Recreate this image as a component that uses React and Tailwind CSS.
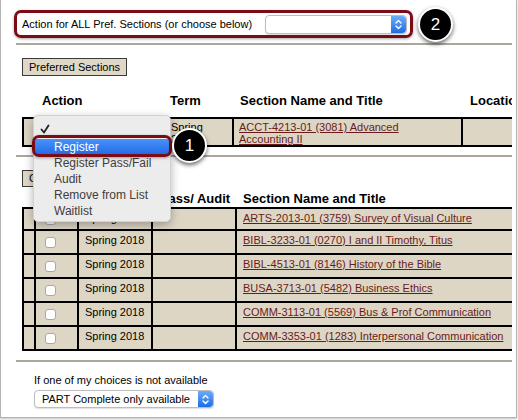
import React from 'react';

const sections = [
    'ARTS-2013-01 (3759) Survey of Visual Culture',
    'BIBL-3233-01 (0270) I and II Timothy, Titus',
    'BIBL-4513-01 (8146) History of the Bible',
    'BUSA-3713-01 (5482) Business Ethics',
    'COMM-3113-01 (5569) Bus & Prof Communication',
    'COMM-3353-01 (1283) Interpersonal Communication',
];

const menuItems = ['Register Pass/Fail', 'Audit', 'Remove from List', 'Waitlist'];

// little blue up/down stepper that mac selects have
const Stepper = () => (
    <span className="flex h-full w-[15px] items-center justify-center rounded-r-[4px] bg-linear-to-b from-[#6badfa] to-[#1c6be6]">
        <svg width="7" height="11" viewBox="0 0 7 11" fill="none" stroke="white" strokeWidth="1.4" strokeLinecap="round" strokeLinejoin="round">
            <path d="M1 4 L3.5 1.5 L6 4" />
            <path d="M1 7 L3.5 9.5 L6 7" />
        </svg>
    </span>
);

const FakeSelect = ({ value, className }) => (
    <div className={`flex items-stretch rounded-[4px] border border-[#bdbdbd] bg-white shadow-[0_1px_1px_rgba(0,0,0,0.12)] ${className}`}>
        <span className="flex-1 truncate pl-[7px] text-[11px] leading-[16px] text-black">{value}</span>
        <Stepper />
    </div>
);

const Badge = ({ n, className }) => (
    <div className={`absolute flex h-[35px] w-[35px] items-center justify-center rounded-full border-2 border-white bg-black text-[17px] text-white shadow-[0_2px_4px_rgba(0,0,0,0.6)] ${className}`}>
        {n}
    </div>
);

const Checkbox = () => (
    <span className="ml-[9px] block h-[11px] w-[11px] rounded-[3px] border border-[#a8a8a8] bg-white" />
);

const App = () => {
    return (
        <div className="relative h-[420px] w-[518px] overflow-hidden bg-white font-['Liberation_Sans',Arial,sans-serif] text-black">
            <div className="h-[418px] w-[517px] border-x border-b border-[#b3b3b3] shadow-[0_1px_2px_rgba(0,0,0,0.25)]">
                <div className="h-full w-[511px] overflow-hidden">
                    {/* action for all */}
                    <div className="ml-[13px] mt-[10px] flex h-[28px] w-[399px] items-center rounded-[7px] border-[3px] border-[#7b0c16] pl-[5px] pr-[2px] shadow-[0_1px_3px_rgba(0,0,0,0.35)]">
                        <span className="text-[11px] whitespace-nowrap">Action for ALL Pref. Sections (or choose below)</span>
                        <FakeSelect className="ml-[13px] h-[19px] w-[142px]" value="" />
                    </div>

                    <div className="ml-[15px] mt-[5px] h-[2px] bg-[#aba79f]" />

                    {/* preferred sections */}
                    <div className="ml-[21px] mt-[13px] h-[18px] w-fit border border-[#3a3a3a] bg-[#e0d8c7] px-[6px] text-[11px] leading-[16px]">
                        Preferred Sections
                    </div>

                    <table className="ml-[21px] mt-[17px] w-[541px] table-fixed border-separate border-spacing-0 text-[11px] font-normal">
                        <colgroup>
                            <col className="w-[146px]" />
                            <col className="w-[66px]" />
                            <col className="w-[229px]" />
                            <col className="w-[100px]" />
                        </colgroup>
                        <thead>
                            <tr className="text-left text-[13px]">
                                <th className="h-[24px] pl-[20px] align-top font-bold leading-[16px]">Action</th>
                                <th className="h-[24px] pl-[2px] align-top font-bold leading-[16px]">Term</th>
                                <th className="h-[24px] pl-[6px] align-top font-bold leading-[16px] whitespace-nowrap">Section Name and Title</th>
                                <th className="h-[24px] pl-[7px] align-top font-bold leading-[16px]">Location</th>
                            </tr>
                        </thead>
                        <tbody>
                            <tr className="bg-[#ded6c5]">
                                <td className="h-[29px] border-y-2 border-x-2 border-black" />
                                <td className="border-y-2 border-r-2 border-black pl-[3px] pt-[2px] align-top font-normal leading-[12px]">
                                    Spring<br />2018
                                </td>
                                <td className="border-y-2 border-r-2 border-black pl-[5px] pt-[2px] align-top font-normal leading-[12px]">
                                    <a className="text-[#6a1b1b] underline">ACCT-4213-01 (3081) Advanced<br />Accounting II</a>
                                </td>
                                <td className="border-y-2 border-r-2 border-black" />
                            </tr>
                        </tbody>
                    </table>

                    <div className="ml-[15px] mt-[8px] h-[2px] bg-[#aba79f]" />

                    {/* other sections */}
                    <div className="ml-[21px] mt-[13px] h-[17px] w-fit border border-[#3a3a3a] bg-[#e0d8c7] px-[6px] text-[11px] leading-[15px]">
                        Course Sections
                    </div>

                    <table className="ml-[21px] mt-[4px] w-[515px] table-fixed border-separate border-spacing-0 text-[11px] font-normal">
                        <colgroup>
                            <col className="w-[14px]" />
                            <col className="w-[43px]" />
                            <col className="w-[74px]" />
                            <col className="w-[84px]" />
                            <col className="w-[300px]" />
                        </colgroup>
                        <thead>
                            <tr className="text-[13px]">
                                <th className="h-[16px] align-top leading-[16px]" />
                                <th className="h-[16px] text-left align-top font-bold leading-[16px]">Add</th>
                                <th className="h-[16px] text-left align-top font-bold leading-[16px]">Term</th>
                                <th className="h-[16px] text-center align-top font-bold leading-[16px] whitespace-nowrap">Pass/ Audit</th>
                                <th className="h-[16px] pl-[6px] text-left align-top font-bold leading-[16px] whitespace-nowrap">Section Name and Title</th>
                            </tr>
                        </thead>
                        <tbody>
                            {sections.map((s, idx) => (
                                <tr key={s} className="bg-[#ded6c5]">
                                    <td className={`h-[24px] border-x-2 border-b-2 border-black ${idx === 0 ? 'border-t-2' : ''}`} />
                                    <td className={`border-r-2 border-b-2 border-black align-middle ${idx === 0 ? 'border-t-2' : ''}`}>
                                        <Checkbox />
                                    </td>
                                    <td className={`border-r-2 border-b-2 border-black pl-[6px] pt-[2px] align-top font-normal leading-[14px] whitespace-nowrap ${idx === 0 ? 'border-t-2' : ''}`}>
                                        Spring 2018
                                    </td>
                                    <td className={`border-r-2 border-b-2 border-black ${idx === 0 ? 'border-t-2' : ''}`} />
                                    <td className={`border-r-2 border-b-2 border-black pl-[6px] pt-[2px] align-top font-normal leading-[14px] whitespace-nowrap ${idx === 0 ? 'border-t-2' : ''}`}>
                                        <a className="text-[#6a1b1b] underline">{s}</a>
                                    </td>
                                </tr>
                            ))}
                        </tbody>
                    </table>

                    <div className="ml-[15px] mt-[9px] h-[2px] bg-[#aba79f]" />

                    <p className="ml-[33px] mt-[11px] text-[11px] leading-[14px]">If one of my choices is not available</p>
                    <FakeSelect className="ml-[33px] mt-[3px] h-[18px] w-[180px]" value="PART Complete only available" />
                </div>
            </div>

            {/* open action menu */}
            <div className="absolute left-[33px] top-[115px] w-[138px] rounded-[5px] border border-[#d2d2d2] bg-[#ececec] pb-[2px] pt-[3px] text-[12px] text-[#3d3d3d] shadow-[0_3px_10px_rgba(0,0,0,0.3)]">
                <div className="flex h-[20px] items-center pl-[6px]">
                    <svg width="10" height="10" viewBox="0 0 10 10" fill="none" stroke="#222" strokeWidth="1.8" strokeLinecap="round" strokeLinejoin="round">
                        <path d="M1.5 5.5 L4 8.5 L8.5 1.5" />
                    </svg>
                </div>
                <div className="h-[16px] bg-linear-to-b from-[#4a92f8] to-[#1f69e6] pl-[20px] leading-[16px] text-white">Register</div>
                {menuItems.map(m => (
                    <div key={m} className="h-[16px] pl-[20px] leading-[16px]">{m}</div>
                ))}
            </div>
            <div className="absolute left-[32px] top-[135px] h-[22px] w-[140px] rounded-[7px] border-[3px] border-[#7b0c16] shadow-[0_1px_3px_rgba(0,0,0,0.35)]" />

            <Badge n="1" className="left-[172px] top-[128px]" />
            <Badge n="2" className="left-[418px] top-[7px]" />
        </div>
    );
};

export default App;
